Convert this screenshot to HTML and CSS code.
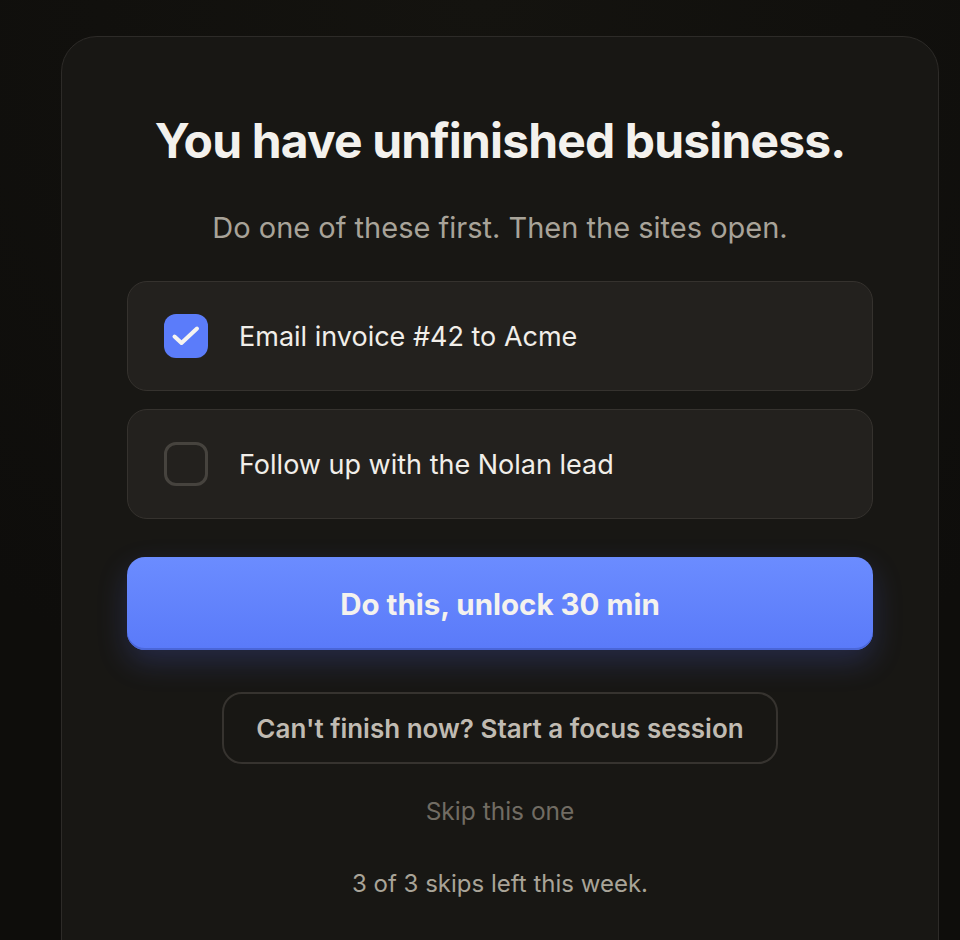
FILE: index.html
```html
<!DOCTYPE html>
<html lang="en">
<head>
<meta charset="utf-8">
<title>Unfinished business</title>
<link rel="stylesheet" href="styles.css">
</head>
<body>
<div class="stage">
  <main class="card">
    <h1 class="title">You have unfinished business.</h1>
    <p class="subtitle">Do one of these first. Then the sites open.</p>
    <div class="tasks">
      <label class="task">
        <span class="box box-checked">
          <svg viewBox="0 0 44 44" width="44" height="44"><path d="M10.5 22.5L17.5 29L33 14.5" fill="none" stroke="#f6f4f0" stroke-width="4" stroke-linecap="round" stroke-linejoin="round"/></svg>
        </span>
        <span class="task-text">Email invoice #42 to Acme</span>
      </label>
      <label class="task">
        <span class="box"></span>
        <span class="task-text">Follow up with the Nolan lead</span>
      </label>
    </div>
    <button class="primary">Do this, unlock 30 min</button>
    <button class="secondary">Can't finish now? Start a focus session</button>
    <a class="skip">Skip this one</a>
    <p class="note">3 of 3 skips left this week.</p>
  </main>
</div>
</body>
</html>
```
FILE: styles.css
```css
html, body {
  margin: 0;
  padding: 0;
}
body {
  background: radial-gradient(circle at 50% 0%, #14130f 0%, #0e0d0b 70%);
  font-family: Inter, "Noto Sans", sans-serif;
  min-height: 940px;
  overflow: hidden;
}
.stage {
  padding: 36px 21px 0 61px;
}
.card {
  box-sizing: border-box;
  width: 878px;
  min-height: 940px;
  border: 1px solid #2d2b28;
  border-radius: 36px;
  background: #181714;
  padding: 76px 65px 40px;
  display: flex;
  flex-direction: column;
  align-items: center;
  text-align: center;
}
.title {
  margin: 0;
  font-size: 48px;
  line-height: 56px;
  font-weight: 700;
  letter-spacing: -0.018em;
  color: #f3f1ed;
  white-space: nowrap;
}
.subtitle {
  margin: 42px 0 0;
  font-size: 29px;
  line-height: 34px;
  color: #a8a399;
  white-space: nowrap;
}
.tasks {
  margin-top: 36px;
  align-self: stretch;
  display: flex;
  flex-direction: column;
  gap: 18px;
}
.task {
  box-sizing: border-box;
  height: 110px;
  display: flex;
  align-items: center;
  gap: 31px;
  padding-left: 36px;
  border: 1px solid #35322e;
  border-radius: 20px;
  background: #23211e;
}
.box {
  box-sizing: border-box;
  flex: none;
  width: 44px;
  height: 44px;
  border-radius: 12px;
  border: 3px solid #46433e;
  display: flex;
  align-items: center;
  justify-content: center;
}
.box-checked {
  border: none;
  background: #5b7cfa;
}
.task-text {
  font-size: 27px;
  color: #f1eee9;
}
.primary {
  margin-top: 38px;
  align-self: stretch;
  height: 93px;
  border: none;
  border-radius: 18px;
  background: linear-gradient(180deg, #6b8cff 0%, #5a7af9 100%);
  box-shadow: inset 0 -2px 0 #4a66d8, 0 12px 30px rgba(88, 110, 250, 0.22);
  font-family: inherit;
  font-size: 29.5px;
  font-weight: 700;
  color: #f4f2ee;
}
.secondary {
  margin-top: 42px;
  box-sizing: border-box;
  width: 556px;
  height: 72px;
  border: 2px solid #36332f;
  border-radius: 20px;
  background: transparent;
  font-family: inherit;
  font-size: 26px;
  font-weight: 600;
  color: #c0bbb2;
}
.skip {
  margin-top: 32px;
  font-size: 24.5px;
  line-height: 30px;
  color: #716c63;
}
.note {
  margin: 43px 0 0;
  font-size: 24px;
  line-height: 30px;
  color: #a9a498;
}
```
